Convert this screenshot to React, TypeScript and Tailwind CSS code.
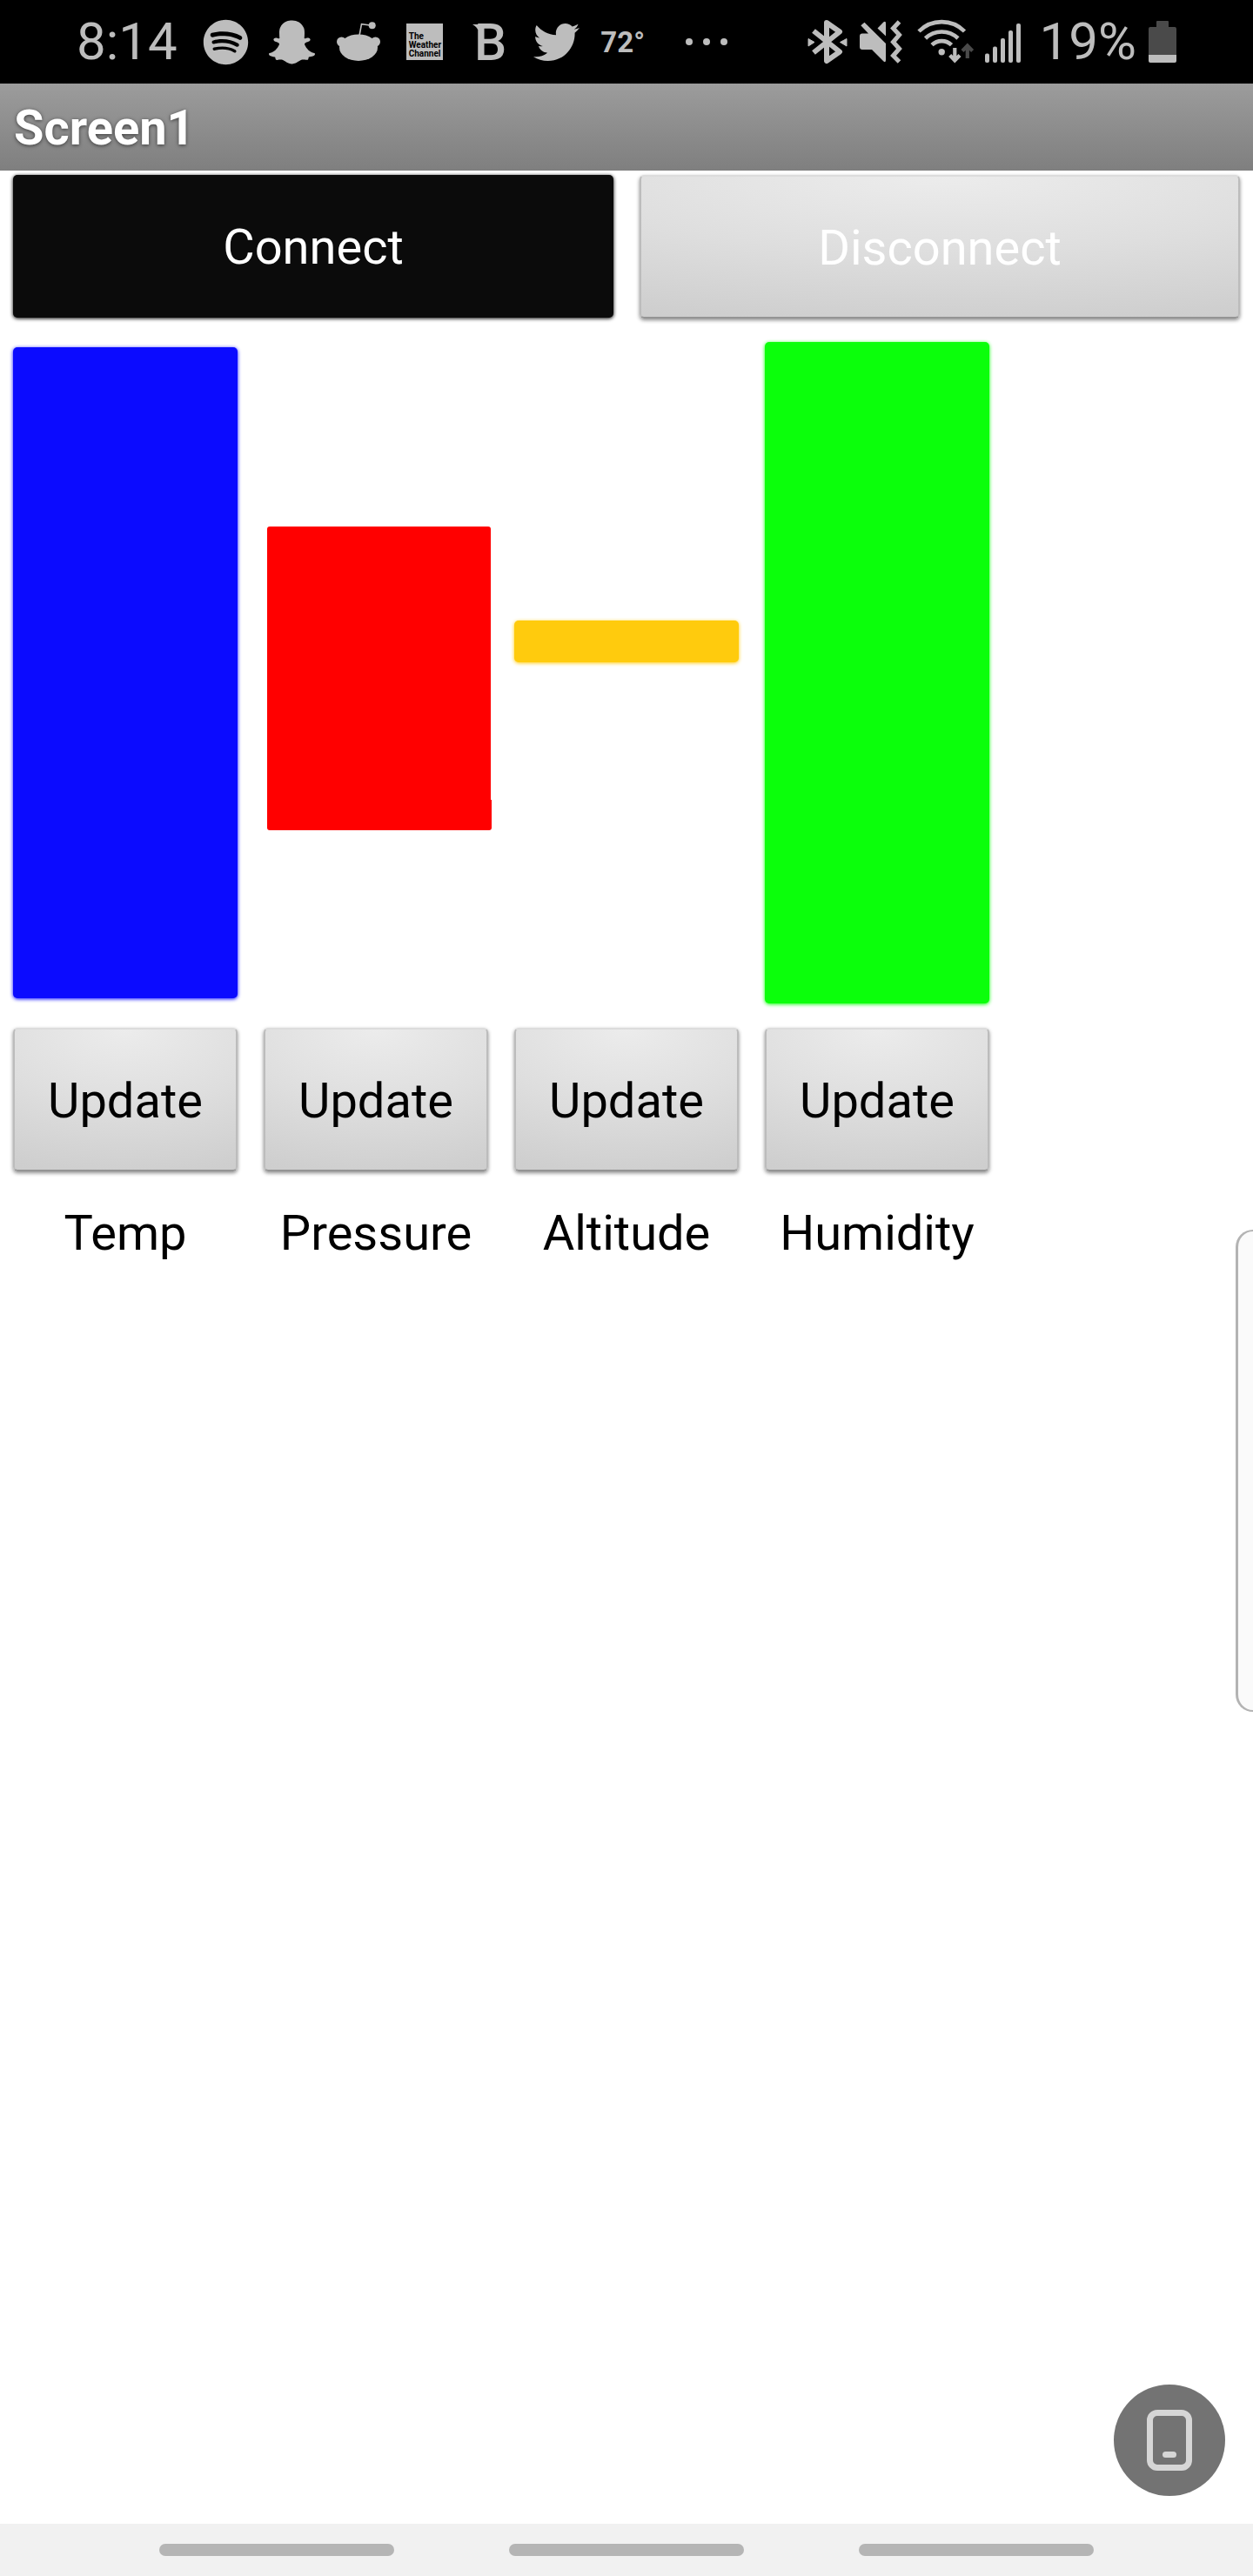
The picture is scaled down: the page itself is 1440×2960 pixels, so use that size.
import type { ReactNode } from "react";
import { FaSnapchatGhost, FaSpotify, FaTwitter } from "react-icons/fa";

function Slot({ label, children }: { label: string; children: ReactNode }) {
  return (
    <span role="img" aria-label={label} className="flex h-14 w-13 shrink-0 items-center justify-center">
      {children}
    </span>
  );
}

function RedditIcon() {
  return (
    <svg className="h-14 w-13" viewBox="0 0 52 56" fill="currentColor" aria-hidden="true">
      <ellipse cx="26" cy="34.7" rx="22" ry="15.3" />
      <circle cx="6.5" cy="28" r="5.5" />
      <circle cx="45.5" cy="28" r="5.5" />
      <path d="M27 21 L29.5 7.6 L41 9.2" fill="none" stroke="currentColor" strokeWidth="1.6" />
      <circle cx="41.7" cy="9.3" r="4" />
    </svg>
  );
}

function BluetoothIcon() {
  return (
    <svg className="h-14 w-[46px] shrink-0" viewBox="0 0 46 56" role="img" aria-label="Bluetooth connected">
      <path d="M7 15.5 L37 39.5 L22 50 V6 L37 16.5 L7 40.5" fill="none" stroke="currentColor" strokeWidth="6" strokeLinejoin="round" />
      <path d="M1 24.5 L8 28.5 L1 33 Z M45 24.5 V33 L37.5 28.5 Z" fill="currentColor" stroke="currentColor" strokeWidth="1" strokeLinejoin="round" />
    </svg>
  );
}

function MuteIcon() {
  return (
    <svg className="h-14 w-[50px] shrink-0" viewBox="0 0 50 56" role="img" aria-label="Vibrate" fill="currentColor">
      <path d="M3 18.5 H10 L1.3 9.2 L5.5 5.7 L30 30 V49 Q30 52.3 27.5 50.5 L14 37 H3 Q0 37 0 34 V21.5 Q0 18.5 3 18.5 Z" />
      <path d="M20.5 12.5 L27.5 5.3 Q30 4 30 6.5 V21.5 Z" />
      <path d="M45.5 5 L38.5 12.5 L45.5 20 L38.5 28.3 L45.5 36 L38.5 44 L45.5 51" fill="none" stroke="currentColor" strokeWidth="5" />
    </svg>
  );
}

function WifiIcon() {
  return (
    <svg className="h-14 w-[66px] shrink-0 overflow-visible" viewBox="0 0 66 56" role="img" aria-label="Wi-Fi" fill="none" stroke="currentColor">
      <path d="M4 16 A37 37 0 0 1 56.5 16 M11.5 24 A27 27 0 0 1 49 24 M19 31.7 A16 16 0 0 1 41.5 31.7" strokeWidth="4.6" />
      <circle cx="30.2" cy="39.7" r="3.7" fill="currentColor" stroke="none" />
      <path d="M45.3 35 V49 M39.7 43.5 L45.3 49.5 L51 43.5" strokeWidth="4.2" />
      <path d="M59.8 47 V33 M54 38.5 L59.8 32.5 L65.6 38.5" stroke="#4a4a4a" strokeWidth="4.2" />
    </svg>
  );
}

function SignalIcon() {
  return (
    <svg className="mr-2 h-14 w-[41px] shrink-0" viewBox="0 0 41 56" role="img" aria-label="Signal strength" fill="currentColor">
      <rect x="0" y="41.5" width="5" height="10.5" rx="2" />
      <rect x="9" y="33.5" width="5" height="18.5" rx="2" />
      <rect x="18" y="24" width="5" height="28" rx="2" />
      <rect x="27" y="15" width="5" height="37" rx="2" />
      <rect x="36" y="7" width="5" height="45" rx="2" />
    </svg>
  );
}

function BatteryIcon() {
  return (
    <svg className="h-14 w-8 shrink-0" viewBox="0 0 32 56" role="img" aria-label="Battery">
      <path d="M9 5 Q9 4 10 4 H22 Q23 4 23 5 V11 H30 Q32 11 32 13 V43 H0 V13 Q0 11 2 11 H9 Z" fill="#4a4a4a" />
      <path d="M0 43 H32 V50 Q32 52 30 52 H2 Q0 52 0 50 Z" fill="#bdbdbd" />
    </svg>
  );
}

function StatusBar() {
  return (
    <div className="flex h-24 items-center justify-between bg-black px-[88px] text-[#bdbdbd]">
      <div className="flex items-center gap-6">
        <span className="mr-1.5 text-[60px] leading-none">8:14</span>
        <Slot label="Spotify">
          <FaSpotify className="size-[53px] shrink-0" />
        </Slot>
        <Slot label="Snapchat">
          <FaSnapchatGhost className="size-[53px] shrink-0" />
        </Slot>
        <Slot label="Reddit">
          <RedditIcon />
        </Slot>
        <Slot label="The Weather Channel">
          <span className="flex size-[42px] flex-col justify-end bg-[#bdbdbd] pb-0.5 pl-[3px] text-[10px] leading-[10px] font-bold text-black">
            <span>The</span>
            <span>Weather</span>
            <span>Channel</span>
          </span>
        </Slot>
        <Slot label="B">
          <span className="relative text-[59px] leading-none font-medium">
            B
            <svg className="absolute top-2 -left-0.5 h-2 w-3" viewBox="0 0 12 8" fill="currentColor" aria-hidden="true">
              <path d="M0 1 H12 V7 H6 Q5 4 0 1 Z" />
            </svg>
          </span>
        </Slot>
        <Slot label="Twitter">
          <FaTwitter className="size-[53px] shrink-0" />
        </Slot>
        <Slot label="72 degrees">
          <span className="text-[33px] leading-none font-bold">72°</span>
        </Slot>
        <div className="ml-5 flex w-13 items-center justify-center gap-3" aria-label="More notifications">
          <span className="size-2 rounded-full bg-[#bdbdbd]" />
          <span className="size-2 rounded-full bg-[#bdbdbd]" />
          <span className="size-2 rounded-full bg-[#bdbdbd]" />
        </div>
      </div>
      <div className="flex items-center gap-3.5">
        <BluetoothIcon />
        <MuteIcon />
        <WifiIcon />
        <SignalIcon />
        <span className="text-[60px] leading-none">19%</span>
        <BatteryIcon />
      </div>
    </div>
  );
}

const grayButton =
  "h-[165px] w-full rounded-[5px] border-2 border-t-[#dcdcdc] border-x-[#bcbcbc] border-b-[#949494] bg-[radial-gradient(ellipse_140%_120%_at_50%_0%,#ececec_0%,#dedede_45%,#cfcfcf_85%,#cbcbcb_100%)] pt-0.5 text-[56px] leading-none shadow-[0_2px_4px_rgba(0,0,0,0.45)]";

const gauges = [
  {
    name: "Temp",
    space: "pt-[33px]",
    bar: <div className="h-[748px] rounded-[5px] bg-[#0b0bff] shadow-[0_1px_4px_#0b0bff]" />,
  },
  {
    name: "Pressure",
    space: "pt-[239px]",
    bar: (
      <div className="ml-1 -mr-1 flex h-[349px] flex-col">
        <div className="mr-px grow rounded-t-[3px] bg-[#ff0000]" />
        <div className="h-[35px] rounded-b-[3px] bg-[#ff0000]" />
      </div>
    ),
  },
  {
    name: "Altitude",
    space: "pt-[347px]",
    bar: <div className="h-12 rounded-[5px] bg-[#ffcb0d] shadow-[0_1px_4px_#ffcb0d]" />,
  },
  {
    name: "Humidity",
    space: "pt-[27px]",
    bar: <div className="h-[760px] rounded-[5px] bg-[#0bff0b] shadow-[0_1px_4px_#0bff0b]" />,
  },
];

export default function App() {
  return (
    <div className="relative flex min-h-screen flex-col overflow-hidden bg-white font-['Roboto',sans-serif] text-black">
      <StatusBar />
      <header className="flex h-25 items-center bg-linear-to-b from-[#9c9c9c] to-[#7f7f7f] px-4 pt-0.5">
        <h1 className="text-[56px] leading-none font-bold text-white [text-shadow:0_1px_4px_rgba(0,0,0,0.6)]">Screen1</h1>
      </header>

      <main className="relative grow">
        <div className="flex pt-[5px]">
          <div className="w-1/2 px-[15px]">
            <button
              type="button"
              className="h-[164px] w-full rounded-[5px] bg-[#0b0b0b] pt-0.5 text-[56px] leading-none text-white shadow-[0_1px_4px_#000000]"
            >
              Connect
            </button>
          </div>
          <div className="w-1/2 px-[15px]">
            <button type="button" className={`${grayButton} text-white`}>
              Disconnect
            </button>
          </div>
        </div>

        <div className="flex">
          {gauges.map(({ name, space, bar }) => (
            <section key={name} aria-label={name} className="w-1/5 px-[15px]">
              <div className={`h-[815px] ${space}`}>{bar}</div>
              <button type="button" className={`${grayButton} text-black`}>
                Update
              </button>
              <p className="mt-[38px] text-center text-[56px] leading-[66px]">{name}</p>
            </section>
          ))}
        </div>

        <aside
          aria-label="Edge panel"
          className="absolute top-[1217px] right-0 h-[554px] w-5 rounded-l-[20px] border-y-2 border-l-3 border-[#b3b3b3] bg-[#fafafa]"
        />
        <button
          type="button"
          aria-label="Rotate screen"
          className="absolute right-8 bottom-8 flex size-32 items-center justify-center rounded-full bg-[#737373] text-[#d6d6d6]"
        >
          <svg className="h-[70px] w-[52px]" viewBox="0 0 52 70" fill="none" stroke="currentColor" strokeWidth="7" aria-hidden="true">
            <rect x="3.5" y="3.5" width="45" height="63" rx="8.5" />
            <path d="M21.5 51.5 H30.5" strokeLinecap="round" />
          </svg>
        </button>
      </main>

      <nav className="flex h-15 items-center justify-center gap-[132px] bg-[#f1f1f1]" aria-label="System navigation">
        <button type="button" aria-label="Recent apps" className="h-3.5 w-[270px] rounded-full bg-[#b5b5b5]" />
        <button type="button" aria-label="Home" className="h-3.5 w-[270px] rounded-full bg-[#b5b5b5]" />
        <button type="button" aria-label="Back" className="h-3.5 w-[270px] rounded-full bg-[#b5b5b5]" />
      </nav>
    </div>
  );
}
